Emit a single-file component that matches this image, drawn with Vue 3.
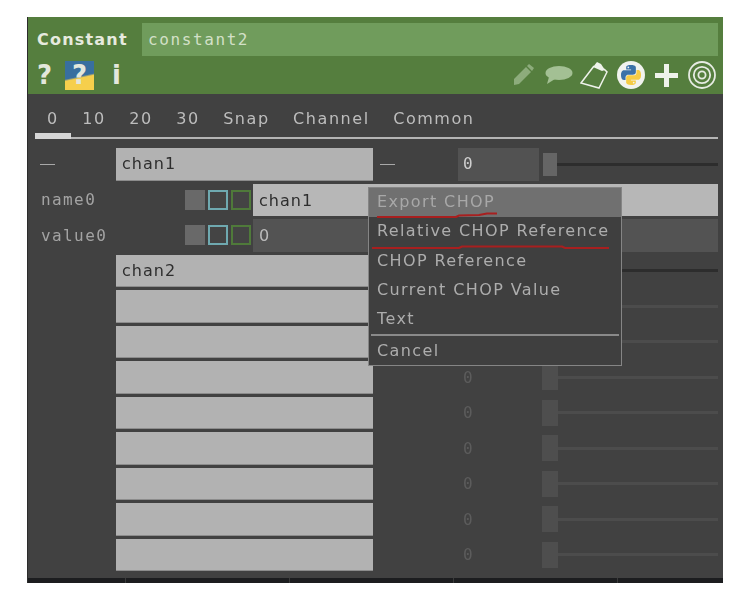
<script setup>
const menuItems = ['Export CHOP', 'Relative CHOP Reference', 'CHOP Reference', 'Current CHOP Value', 'Text']
const tabs = ['0', '10', '20', '30', 'Snap', 'Channel', 'Common']
const emptyRows = 8
const pythonPath = 'M54.9 0C26.8 0 28.6 12.2 28.6 12.2v12.6h26.8v3.8H17.9S0 26.6 0 54.9c0 28.3 15.6 27.3 15.6 27.3h9.3V69.1s-.5-15.6 15.4-15.6h26.5s14.9.2 14.9-14.4V14.9S84 0 54.9 0zM40.2 8.5a4.8 4.8 0 1 1 0 9.6 4.8 4.8 0 0 1 0-9.6z'
</script>

<template>
  <main class="panel">
    <header class="header">
      <div class="title-row">
        <span class="op-type">Constant</span>
        <span class="op-name">constant2</span>
      </div>
      <div class="tool-row">
        <span class="glyph">?</span>
        <span class="help-badge"><span class="glyph">?</span></span>
        <span class="glyph info">i</span>
        <div class="tool-right">
          <svg width="22" height="24" viewBox="0 0 22 24">
            <path d="M1 16 13 4l5 5L6 21l-5 1z" fill="#8dac7c" />
            <path d="M14 3l2-2 5 4-2 3z" fill="#8dac7c" />
          </svg>
          <svg width="29" height="20" viewBox="0 0 29 20">
            <ellipse cx="15" cy="8" rx="13.5" ry="7" fill="#a3c094" />
            <path d="M5 12 3 19l8-5z" fill="#a3c094" />
          </svg>
          <svg class="clipboard" width="28" height="28" viewBox="0 0 28 28">
            <path d="M14 5 1 22l18 5 8-16-3-3" fill="none" stroke="#eef2ea" stroke-width="1.5" />
            <path d="M13 6l4-5 4 2 4 6-3 1z" fill="#eef2ea" />
          </svg>
          <svg width="28" height="28" viewBox="0 0 28 28">
            <circle cx="14" cy="14" r="14" fill="#f1f3ee" />
            <g transform="translate(4 4) scale(0.182)">
              <path :d="pythonPath" fill="#3b72a8" />
              <path :d="pythonPath" fill="#f5cc45" transform="rotate(180 55 55)" />
            </g>
          </svg>
          <svg class="plus" width="23" height="23" viewBox="0 0 23 23">
            <path d="M9 0h5v9h9v5h-9v9H9v-9H0V9h9z" fill="#eef2ea" />
          </svg>
          <svg width="28" height="28" viewBox="0 0 28 28" fill="none" stroke="#e6ebe2">
            <circle cx="14" cy="14" r="13" stroke-width="1.8" />
            <circle cx="14" cy="14" r="8.2" stroke-width="1.8" />
            <circle cx="14" cy="14" r="3.6" stroke-width="1.8" />
          </svg>
        </div>
      </div>
    </header>

    <nav class="tabs">
      <span v-for="(tab, i) in tabs" :key="tab" class="tab" :class="{ active: i === 0 }">{{ tab }}</span>
    </nav>

    <section class="rows">
      <div class="row">
        <span class="dash"></span>
        <span class="field">chan1</span>
        <span class="dash dash-right"></span>
        <span class="value-field">0</span>
        <span class="handle"></span>
        <span class="track dark"></span>
      </div>

      <div class="row">
        <span class="param-label">name0</span>
        <span class="swatch gray"></span>
        <span class="swatch cyan"></span>
        <span class="swatch green"></span>
        <span class="wide-field light">chan1</span>
      </div>

      <div class="row">
        <span class="param-label">value0</span>
        <span class="swatch gray"></span>
        <span class="swatch cyan"></span>
        <span class="swatch green"></span>
        <span class="wide-field dim">0</span>
      </div>

      <div class="row">
        <span class="dash hidden"></span>
        <span class="field">chan2</span>
        <span class="dash dash-right hidden"></span>
        <span class="value-text"></span>
        <span class="handle"></span>
        <span class="track dark"></span>
      </div>

      <!-- les 2 premieres valeurs sont sous le menu -->
      <div v-for="n in emptyRows" :key="n" class="row">
        <span class="dash hidden"></span>
        <span class="field"></span>
        <span class="dash dash-right hidden"></span>
        <span class="value-text">{{ n > 2 ? '0' : '' }}</span>
        <span class="handle faint"></span>
        <span class="track"></span>
      </div>
    </section>

    <footer class="bottom-strip">
      <span></span><span></span><span></span><span></span><span></span>
    </footer>

    <div class="menu">
      <div v-for="(item, i) in menuItems" :key="item" class="menu-item" :class="{ hover: i === 0 }">{{ item }}</div>
      <div class="menu-sep"></div>
      <div class="menu-item cancel">Cancel</div>
      <svg class="scribble" width="254" height="70" viewBox="0 0 254 70" fill="none" stroke="#a81f1f" stroke-width="2.2">
        <path d="M8 30h79l3-1.5 20-.5 8-1.5h10" />
        <path d="M3 61h87l3-1.5h100l3 1.5h44" />
      </svg>
    </div>
  </main>
</template>

<style scoped>
.panel {
  position: relative;
  box-sizing: border-box;
  width: 696px;
  height: 566px;
  margin: 17px 0 0 27px;
  background: #414141;
  border-left: 1px solid #2c2c2c;
  font-family: "DejaVu Sans Mono", monospace;
  font-size: 16px;
  letter-spacing: 1.6px;
  color: #c4c4c4;
  display: flex;
  flex-direction: column;
  filter: blur(0.5px);
}

.header {
  height: 77px;
  background: #557e3e;
  padding: 6px 5px 0 9px;
  box-sizing: border-box;
}

.title-row {
  display: flex;
  align-items: stretch;
  height: 33px;
}

.op-type {
  width: 105px;
  line-height: 33px;
  font-family: "DejaVu Sans", sans-serif;
  font-weight: bold;
  letter-spacing: 1.2px;
  color: #e6eadf;
}

.op-name {
  flex: 1;
  background: #709c5c;
  color: #d3e0c8;
  line-height: 33px;
  padding-left: 6px;
}

.tool-row {
  display: flex;
  align-items: center;
  height: 38px;
}

.glyph {
  font-family: "DejaVu Sans", sans-serif;
  font-weight: bold;
  font-size: 26px;
  letter-spacing: 0;
  color: #e3e7dc;
  line-height: 1;
}

.help-badge {
  width: 29px;
  height: 29px;
  margin-left: 13px;
  display: flex;
  align-items: center;
  justify-content: center;
  background: linear-gradient(168deg, #386f9f 52%, #f6cf4c 58%);
}

.info {
  margin-left: 18px;
}

.tool-right {
  margin-left: auto;
  display: flex;
  align-items: center;
  gap: 9px;
  padding-right: 2px;
}

.clipboard {
  margin-left: -2px;
}

.plus {
  margin: 0 1px;
}

.tabs {
  display: flex;
  height: 45px;
  margin: 0 5px 0 7px;
  padding-left: 12px;
  box-sizing: border-box;
  border-bottom: 2px solid #b4b4b4;
  gap: 23.5px;
  position: relative;
  font-family: "DejaVu Sans", sans-serif;
  letter-spacing: 1.55px;
}

.tab {
  line-height: 49px;
  color: #bdbdbd;
}

.tab.active::after {
  content: "";
  position: absolute;
  left: 0;
  bottom: -2px;
  width: 36px;
  height: 6px;
  background: #d6d6d6;
}

.rows {
  display: flex;
  flex-direction: column;
  gap: 3px;
  margin-top: 9px;
}

.row {
  display: flex;
  align-items: center;
  height: 32.5px;
  padding-right: 5px;
}

.dash {
  width: 88px;
  flex: none;
  position: relative;
  align-self: stretch;
}

.dash::before {
  content: "";
  position: absolute;
  left: 12px;
  top: 16px;
  width: 15px;
  height: 1px;
  background: #a8a8a8;
}

.dash.hidden::before {
  display: none;
}

.dash-right {
  width: 85px;
}

.dash-right::before {
  left: 7px;
}

.field {
  width: 257px;
  flex: none;
  align-self: stretch;
  box-sizing: border-box;
  background: #b2b2b2;
  border-bottom: 1px solid #8c8c8c;
  color: #2e2e2e;
  font-family: "DejaVu Sans", sans-serif;
  line-height: 32px;
  padding-left: 6px;
  letter-spacing: 1px;
}

.value-field {
  width: 81px;
  flex: none;
  align-self: stretch;
  background: #525252;
  color: #cfcfcf;
  line-height: 32px;
  padding-left: 5px;
  box-sizing: border-box;
}

.value-text {
  width: 84px;
  flex: none;
  padding-left: 5px;
  box-sizing: border-box;
  color: #5c5c5c;
}

.handle {
  width: 14px;
  height: 23px;
  margin-left: 4px;
  flex: none;
  background: #656565;
}

.handle.faint {
  width: 16px;
  height: 26px;
  margin-left: 0;
  background: #4e4e4e;
}

.track {
  flex: 1;
  height: 3px;
  background: #4c4c4c;
}

.track.dark {
  background: #2d2d2d;
}

.param-label {
  width: 157px;
  flex: none;
  padding-left: 13px;
  box-sizing: border-box;
  color: #a3a3a3;
  letter-spacing: 1.4px;
}

.swatch {
  width: 20px;
  height: 20px;
  flex: none;
  box-sizing: border-box;
  margin-right: 3px;
}

.gray {
  background: #696969;
}

.cyan {
  border: 2px solid #6fa9b0;
  background: #444;
}

.green {
  border: 2px solid #4f7a3a;
  background: #444;
}

.wide-field {
  flex: 1;
  align-self: stretch;
  line-height: 33px;
  padding-left: 6px;
  margin-left: -1px;
  font-family: "DejaVu Sans", sans-serif;
}

.wide-field.light {
  background: #b7b7b7;
  color: #2e2e2e;
  letter-spacing: 1px;
}

.wide-field.dim {
  background: #535353;
  color: #bcbcbc;
}

.bottom-strip {
  margin-top: auto;
  height: 5px;
  display: flex;
  background: #1c1d1f;
}

.bottom-strip span {
  flex: none;
  width: 164px;
  border-left: 1px solid #3a3a3a;
  box-sizing: border-box;
}

.bottom-strip span:first-child {
  width: 97px;
  border-left: 0;
}

.menu {
  position: absolute;
  left: 340px;
  top: 170px;
  width: 254px;
  height: 179px;
  box-sizing: border-box;
  background: #3f3f3f;
  border: 1px solid #858585;
  font-family: "DejaVu Sans", sans-serif;
  font-size: 16px;
  letter-spacing: 1.38px;
  color: #adadad;
}

.menu-item {
  height: 29.3px;
  line-height: 28px;
  padding-left: 8px;
}

.menu-item.hover {
  background: #707070;
  color: #a8a8a8;
}

.menu-sep {
  height: 2px;
  margin: 0 2px;
  background: #8a8a8a;
}

.menu-item.cancel {
  height: 30px;
  line-height: 30px;
}

.scribble {
  position: absolute;
  left: 0;
  top: -1px;
  overflow: visible;
}
</style>
